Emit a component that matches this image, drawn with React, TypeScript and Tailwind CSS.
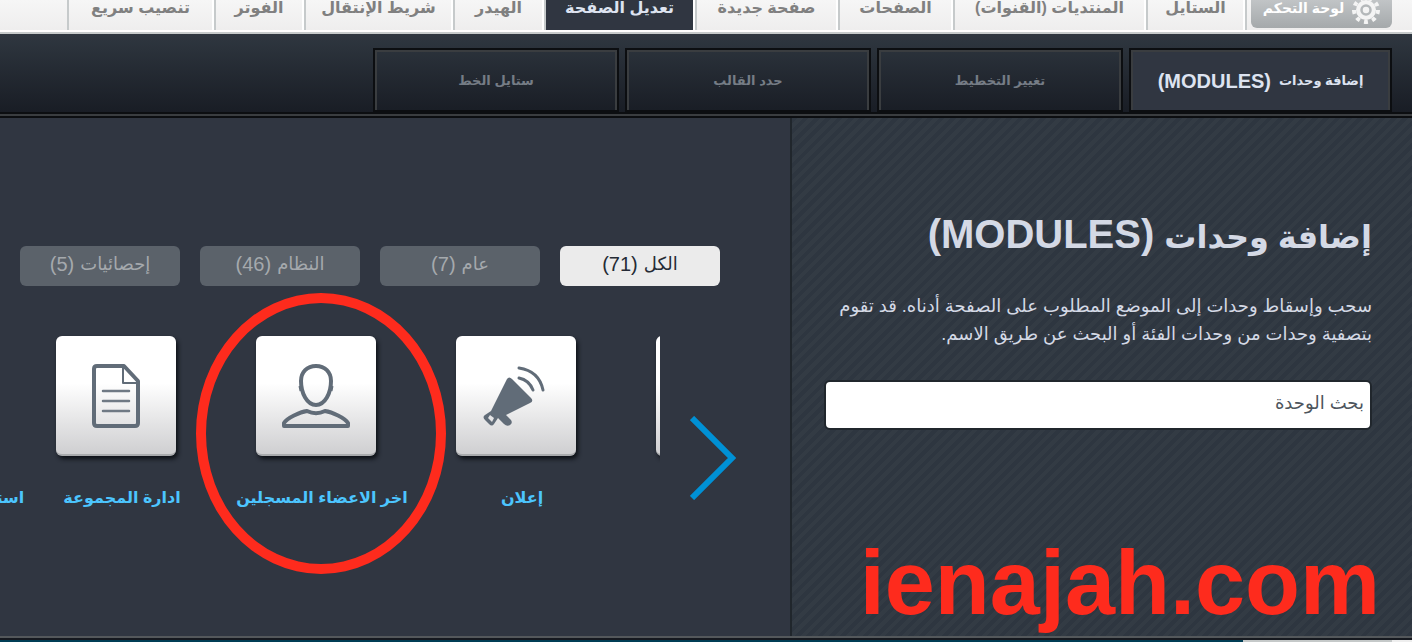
import React, { useState } from "react";

const navItems = [
  { title: "الستايل", width: "w-[99px]" },
  { title: "المنتديات (القنوات)", width: "w-[193px]" },
  { title: "الصفحات", width: "w-[115px]" },
  { title: "صفحة جديدة", width: "w-[143px]" },
  { title: "تعديل الصفحة", width: "w-[151px]", active: true },
  { title: "الهيدر", width: "w-[91px]" },
  { title: "شريط الإنتقال", width: "w-[149px]" },
  { title: "الفوتر", width: "w-[90px]" },
  { title: "تنصيب سريع", width: "w-[147px]" },
];

const tabs = ["تغيير التخطيط", "حدد القالب", "ستايل الخط"];

const filters = [
  { title: "الكل", count: 71 },
  { title: "عام", count: 7 },
  { title: "النظام", count: 46 },
  { title: "إحصائيات", count: 5 },
];

const GearIcon = () => (
  <svg viewBox="0 0 28 28" className="h-7 w-7 shrink-0" fill="none" stroke="#f4f4f4">
    <circle cx="14" cy="14" r="9" fill="#f4f4f4" strokeWidth="2" />
    <circle cx="14" cy="14" r="12" strokeWidth="4" strokeDasharray="4 4.38" />
    <circle cx="14" cy="14" r="4.5" stroke="#b4b8ba" strokeWidth="2.5" />
  </svg>
);

const HornIcon = () => (
  <svg viewBox="0 0 120 120" className="h-[120px] w-[120px]" fill="none" stroke="#616c78">
    <path
      d="M51 43 Q53 40 56 43 L75 62 Q78 65 74 67 L50 79 L55 84 Q57 87 54 89 Q51 91 48 88 L42 82 L38 88 Q36 91 33 88 L29 84 Q26 81 29 79 L35 75 Z"
      fill="#616c78"
      stroke="none"
    />
    <path d="M63 42 Q73 44 77 54" strokeWidth="3" strokeLinecap="round" />
    <path d="M63 32 Q83 35 87 54" strokeWidth="3" strokeLinecap="round" />
    <path d="M34 79 L38 82 L36 86 L32 82 Z" fill="#e4e4e6" stroke="none" />
  </svg>
);

const UserIcon = () => (
  <svg
    viewBox="0 0 120 120"
    className="h-[120px] w-[120px]"
    fill="none"
    stroke="#616c78"
    strokeWidth="4"
    strokeLinejoin="round"
  >
    <path d="M60 30 C51 30 45 36 45 45 C45 57 51 69 60 69 C69 69 75 57 75 45 C75 36 69 30 60 30 Z" />
    <path d="M44 50 L45 55 M76 50 L75 55" strokeWidth="3" />
    <path d="M28 90 L28 87 C31 82 44 76 51 75 C57 78 63 78 69 75 C76 76 89 82 92 87 L92 90 Z" />
  </svg>
);

const PageIcon = () => (
  <svg viewBox="0 0 120 120" className="h-[120px] w-[120px]" fill="none" stroke="#616c78" strokeLinejoin="round">
    <path
      d="M41 30 L68 30 L82 45 L82 87 Q82 90 79 90 L41 90 Q38 90 38 87 L38 33 Q38 30 41 30 Z"
      strokeWidth="4"
    />
    <path d="M67 30 L67 47 L82 47" strokeWidth="2" />
    <path d="M47 55 H73 M47 65 H73 M47 75 H73" stroke="#6f7984" strokeWidth="2.5" strokeLinecap="round" />
  </svg>
);

const modules = [
  { id: 1, title: "", icon: null },
  { id: 2, title: "إعلان", icon: <HornIcon /> },
  { id: 3, title: "اخر الاعضاء المسجلين", icon: <UserIcon />, marked: true },
  { id: 4, title: "ادارة المجموعة", icon: <PageIcon /> },
  { id: 5, title: "استفتاء الاعضاء المسجلين", icon: null },
];

const Header = () => (
  <nav className="h-[34px] border-b-2 border-[#c6cacb] bg-linear-to-b from-[#f6f6f6] to-[#eeeded] text-base font-bold text-[#808080]">
    <div className="flex h-8 items-end border-b-2 border-white pr-5">
      <div className="flex h-12 shrink-0 items-end border-l-2 border-[#c6cacb] pb-[2px] pl-1">
        <a
          href="#"
          className="flex h-10 w-[141px] items-end justify-center gap-2 rounded-md bg-linear-to-b from-[#cdd0d2] to-[#a5a9ab] pb-1 text-sm text-white"
        >
          <GearIcon />
          <span className="pb-1 leading-6">لوحة التحكم</span>
        </a>
      </div>
      {navItems.map((item) => (
        <a
          key={item.title}
          href="#"
          className={`${item.width} flex h-12 shrink-0 items-end justify-center border-r-2 border-l-2 border-r-white border-l-[#c6cacb] pb-[10px] leading-6 whitespace-nowrap ${
            item.active ? "bg-[#303641] text-[#dde3f0]" : ""
          }`}
        >
          {item.title}
        </a>
      ))}
    </div>
  </nav>
);

const Toolbar = () => (
  <div>
    <div className="flex h-[78px] items-end gap-[6px] bg-linear-to-b from-[#2f3740] to-[#191d25] pr-5 text-[13px] font-bold text-[#757c85]">
      <button className="h-16 w-[263px] border-2 border-[#0c0e11] text-[#dde3f0]">
        <span className="flex h-full items-center justify-center gap-2 border-2 border-b-0 border-[#3a3d40] bg-[#303641]">
          إضافة وحدات <span className="text-xl">(MODULES)</span>
        </span>
      </button>
      {tabs.map((tab) => (
        <button key={tab} className="h-16 w-[246px] border-2 border-[#0c0e11]">
          <span className="flex h-full items-center justify-center border-2 border-b-0 border-[#3a3d40]">{tab}</span>
        </button>
      ))}
    </div>
    <div className="h-[6px] border-y-2 border-[#0c0e11] bg-[#3a3d40]" />
  </div>
);

const SearchPanel = () => {
  const [search, setSearch] = useState("");
  return (
    <section className="relative w-[622px] shrink-0 border-l-2 border-[#20262c] bg-[repeating-linear-gradient(135deg,#2e3640_0px,#2e3640_4px,#333b44_4px,#333b44_8px)] pr-10 pl-8">
      <h1 className="mt-[86px] flex h-[60px] items-baseline gap-[10px] text-[32px] leading-[60px] font-bold text-[#d4d9e5]">
        إضافة وحدات
        <span className="text-[40px]">(MODULES)</span>
      </h1>
      <p className="mt-7 text-lg leading-7 text-[#d4d9e5]">
        سحب وإسقاط وحدات إلى الموضع المطلوب على الصفحة أدناه. قد تقوم بتصفية وحدات من وحدات الفئة أو البحث عن طريق
        الاسم.
      </p>
      <input
        type="text"
        aria-label="بحث الوحدة"
        placeholder="بحث الوحدة"
        value={search}
        onChange={(e) => setSearch(e.target.value)}
        className="mt-8 h-[50px] w-full rounded-md border-2 border-[#20262c] bg-white px-1.5 pb-1 text-lg text-[#333] placeholder:text-[#4d555d]"
      />
      <div dir="ltr" className="absolute right-8 bottom-2 text-[90px] leading-[90px] font-bold text-[#fe2b1d]">
        ienajah.com
      </div>
    </section>
  );
};

const ModulePanel = () => {
  const [filter, setFilter] = useState(0);
  return (
    <section className="min-w-0 grow">
      <div className="mt-32 mr-[70px] flex gap-5 text-lg">
        {filters.map((item, i) => (
          <button
            key={item.title}
            onClick={() => setFilter(i)}
            className={`flex h-10 w-40 shrink-0 items-center justify-center gap-1.5 rounded-md pb-1 ${
              filter === i ? "bg-[#ebebeb] text-[#252b35]" : "bg-[#5b626a] text-[#a5a9ad]"
            }`}
          >
            {item.title} <span className="text-xl">({item.count})</span>
          </button>
        ))}
      </div>
      <div className="flex gap-[30px] pr-[54px]">
        <button aria-label="السابق" className="mt-[130px] h-[84px] w-[46px] shrink-0">
          <svg viewBox="0 0 46 84" className="h-full w-full" fill="none" stroke="#0091d5" strokeWidth="6">
            <path d="M2 2 L42 42 L2 82" />
          </svg>
        </button>
        <ul className="flex h-[350px] min-w-0 grow overflow-hidden">
          {modules.map((item) => (
            <li
              key={item.id}
              className="relative flex w-[200px] shrink-0 flex-col items-center pt-[50px] first:-mr-[156px]"
            >
              <div className="h-[120px] w-[120px] rounded-md border-b-2 border-[#a9abad] bg-linear-to-b from-white from-40% to-[#cfcfd1] shadow-[2px_3px_4px_#0d1116]">
                {item.icon}
              </div>
              <a href="#" className="mt-7 pl-3 leading-7 font-bold whitespace-nowrap text-[#4cc5fe]">
                {item.title}
              </a>
              {item.marked && (
                <span className="pointer-events-none absolute top-[7px] -right-[30px] z-10 h-[281px] w-[250px] rounded-[50%] border-10 border-[#fe2b1d]" />
              )}
            </li>
          ))}
        </ul>
      </div>
    </section>
  );
};

export default function App() {
  return (
    <div
      dir="rtl"
      className="overflow-hidden bg-[#303641] font-['Liberation_Sans','DejaVu_Sans',sans-serif]"
    >
      <Header />
      <Toolbar />
      <main className="flex h-[518px]">
        <SearchPanel />
        <ModulePanel />
      </main>
      <footer className="flex h-[6px] border-t-2 border-[#54585b] bg-[#003e55]">
        <div className="w-5 border-t-2 border-[#16191f] bg-[#eeeeee]" />
        <div className="w-[149px] border-t-2 border-[#16191f] bg-[#c5c9c9]" />
        <div className="grow border-t-2 border-[#16191f]" />
      </footer>
    </div>
  );
}
